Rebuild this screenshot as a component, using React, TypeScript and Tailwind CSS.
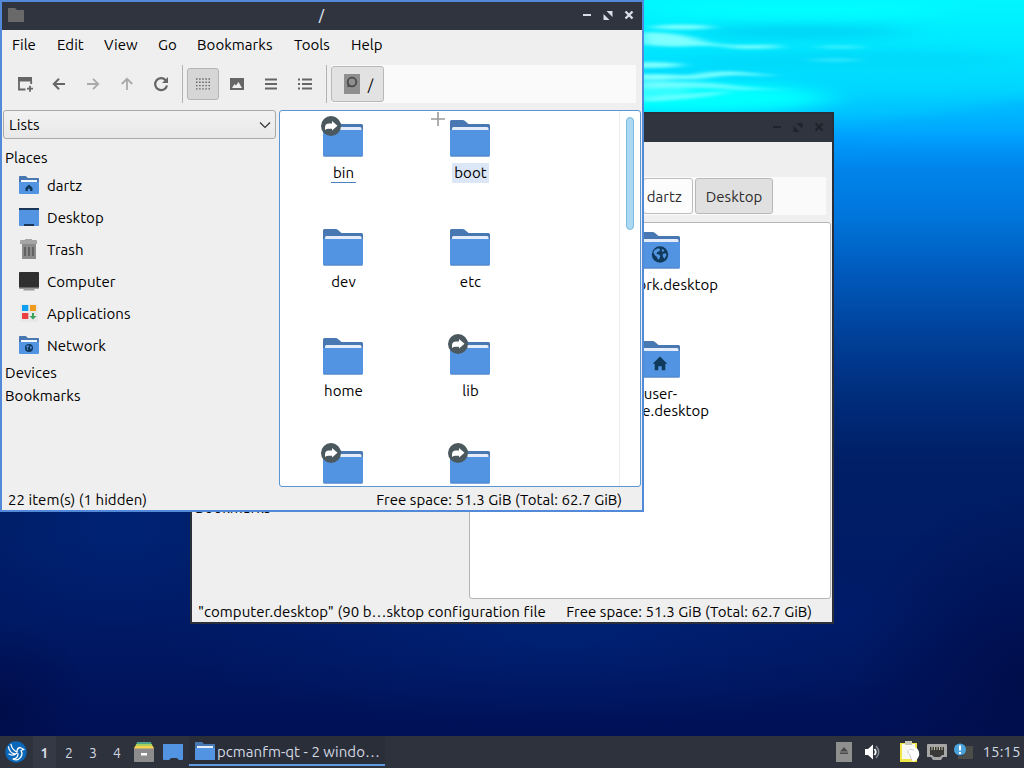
import type { ReactNode } from "react";

// ─── Data ─────────────────────────────────────────────────────────────────────

type Emblem = "globe" | "home";

interface FileItem {
  lines: string[];
  link?: boolean;
  emblem?: Emblem;
  state?: "hover" | "current";
}

const MENUS = [
  { label: "File", width: "w-[45px]" },
  { label: "Edit", width: "w-[47px]" },
  { label: "View", width: "w-[54px]" },
  { label: "Go", width: "w-[39px]" },
  { label: "Bookmarks", width: "w-[97px]" },
  { label: "Tools", width: "w-[57px]" },
  { label: "Help", width: "w-[40px]" },
];

const ROOT_FILES: FileItem[] = [
  { lines: ["bin"], link: true, state: "current" },
  { lines: ["boot"], state: "hover" },
  { lines: ["dev"] },
  { lines: ["etc"] },
  { lines: ["home"] },
  { lines: ["lib"], link: true },
  { lines: [], link: true },
  { lines: [], link: true },
];

const DESKTOP_FILES: FileItem[] = [
  { lines: ["network.desktop"], emblem: "globe" },
  { lines: ["user-", "home.desktop"], emblem: "home" },
];

// ─── Icons ────────────────────────────────────────────────────────────────────

function GlobeMark() {
  return (
    <>
      <circle cx="20.500" cy="22.500" r="8.200" fill="#103a5c" />
      <path
        d="M15 18l3.500-1.700 2 .7-.5 2.200-2.300.8-.7 2 2.800.5 1 1.800-1 2.700-1.300.5-1.200-2.700-2-1.500-1.500-2.800zM22.500 17l2.500 1.200-1.200 1.600-1.600-.6zM23 22l3.500-.8.4 2-1.900 3.600-1.500-1.800z"
        fill="#5294e2"
      />
    </>
  );
}

function HomeMark() {
  return <path d="M20.500 15.500l7.300 7.300h-2v6.400h-3.600v-4h-3.400v4h-3.600v-6.400h-2z" fill="#103a5c" />;
}

function FolderIcon({ link, emblem }: { link?: boolean; emblem?: Emblem }) {
  return (
    <svg viewBox="0.500 0 41 37" className="block w-[41px] h-[37px] overflow-visible">
      <path d="M0.500 1.500q0-1.500 1.500-1.500h11q1.500 0 2.500 1l3.500 3h20q1.500 0 1.500 1.500V20H0.500z" fill="#4877b1" />
      <path d="M2.500 12V8.500Q2.500 7 4 7h33.500Q39 7 39 8.500V12z" fill="#e3ecf8" />
      <path d="M0.500 10h40v25q0 1.500-1.500 1.500H2q-1.500 0-1.500-1.500z" fill="#5294e2" />
      <path d="M1 36h39" stroke="#5585c4" strokeWidth="1" />
      {emblem === "globe" && <GlobeMark />}
      {emblem === "home" && <HomeMark />}
      {link && (
        <>
          <circle cx="8.500" cy="6" r="10" fill="#4b585e" />
          <path d="M2.500 10V7.500Q2.500 3.500 6.500 3.500H9.500V1l5.500 4.800-5.500 4.700V8.700H6Q4 8.700 2.500 10z" fill="#fff" />
        </>
      )}
    </svg>
  );
}

function PlaceFolder({ emblem }: { emblem: Emblem }) {
  return (
    <svg viewBox="0 0 20 18" className="w-5 h-[18px]">
      <path d="M0 .8Q0 0 .8 0h6l2 2H19q1 0 1 1v6H0z" fill="#4877b1" />
      <path d="M2 4h16v3H2z" fill="#f4f7fc" />
      <path d="M0 6h20v11q0 1-1 1H1q-1 0-1-1z" fill="#5294e2" />
      {emblem === "home" ? (
        <path d="M10 8.500l3.500 3.300v3.200h-2.400v-2.300H8.900V15H6.500v-3.200z" fill="#103a5c" />
      ) : (
        <>
          <circle cx="10" cy="12" r="4" fill="#103a5c" />
          <path d="M7.500 10l2-1 .5 1.500-1.500 1 .8 2-1 .7zM11.500 10l1.500 1-1 2.500-1-1.500z" fill="#5294e2" />
        </>
      )}
    </svg>
  );
}

function DesktopIcon() {
  return (
    <svg viewBox="0 0 20 18" className="w-5 h-[18px]">
      <rect width="20" height="18" rx=".8" fill="#5294e2" />
      <path d="M0 0h20v2H0zM5 16h10v2H5z" fill="#1b3556" />
    </svg>
  );
}

function TrashIcon() {
  return (
    <svg viewBox="0 0 20 20" className="w-5 h-5">
      <path d="M1 2q0-1 1-1h4V0h7v1h4q1 0 1 1v3H1z" fill="#a5a5a5" />
      <path d="M3 5h14v15H3z" fill="#8b8b8b" />
      <path d="M6 8v9M10 8v9M14 8v9" stroke="#5c5c5c" strokeWidth="1.700" />
    </svg>
  );
}

function ComputerIcon() {
  return (
    <svg viewBox="0 0 20 19" className="w-5 h-[19px]">
      <rect y="0" width="20" height="16" rx=".7" fill="#2f2f2f" />
      <path d="M0 15.500h20v.8q0 .7-.7.700H.7q-.7 0-.7-.7zM5 17h10l1 1.500H4z" fill="#999" />
    </svg>
  );
}

function ApplicationsIcon() {
  return (
    <svg viewBox="0 0 20 20" className="w-5 h-5">
      <rect x="1" y="1" width="18" height="18" rx="1" fill="#e9e8e6" />
      <path d="M3 2h6.300v6H3z" fill="#0d9ff0" />
      <path d="M11 2h6v6h-6z" fill="#ee9b1c" />
      <path d="M3 10h6.300v6H3z" fill="#ea3f42" />
      <path d="M13 10h2v3h2.500L14 16.500 10.500 13H13z" fill="#3aa35c" />
    </svg>
  );
}

const PLACES: { label: string; icon: ReactNode }[] = [
  { label: "dartz", icon: <PlaceFolder emblem="home" /> },
  { label: "Desktop", icon: <DesktopIcon /> },
  { label: "Trash", icon: <TrashIcon /> },
  { label: "Computer", icon: <ComputerIcon /> },
  { label: "Applications", icon: <ApplicationsIcon /> },
  { label: "Network", icon: <PlaceFolder emblem="globe" /> },
];

// ─── Toolbar ──────────────────────────────────────────────────────────────────

function ToolButton({ checked, faded, children }: { checked?: boolean; faded?: boolean; children: ReactNode }) {
  return (
    <button
      className={`flex items-center justify-center w-8 h-8 rounded-[3px] border ${
        checked ? "bg-[#d6d6d6] border-[#b4b4b4]" : "border-transparent"
      } ${faded ? "text-[#a9a9a9]" : "text-[#666]"}`}
    >
      <svg viewBox="0 0 16 16" className="w-4 h-4 shrink-0" fill="none" stroke="currentColor" strokeWidth="2">
        {children}
      </svg>
    </button>
  );
}

function Toolbar({ children }: { children: ReactNode }) {
  return (
    <div className="flex items-center h-[50px] pl-[7px] pr-[6px] shrink-0">
      <div className="flex gap-0.5">
        <ToolButton>
          <path d="M1 1h14v4.500H1z" fill="currentColor" stroke="none" />
          <path d="M2 4v9.500h6.500M14.200 5v3" strokeWidth="1.800" />
          <path d="M13 9.700v6M10 12.700h6" strokeWidth="1.800" />
        </ToolButton>
        <ToolButton>
          <path d="M14 8H3.500M8 2.800L2.800 8 8 13.200" />
        </ToolButton>
        <ToolButton faded>
          <path d="M2 8h10.500M8 2.800L13.200 8 8 13.200" strokeWidth="1.800" />
        </ToolButton>
        <ToolButton faded>
          <path d="M8 14V3.500M2.800 8L8 2.800 13.200 8" strokeWidth="1.800" />
        </ToolButton>
        <ToolButton>
          <path d="M12.700 4.200A6 6 0 1 0 14 9.500" strokeWidth="2.200" />
          <path d="M15 1v6H9z" fill="currentColor" stroke="none" />
        </ToolButton>
      </div>
      <div className="w-px h-[38px] ml-[5px] mr-1 bg-[#b4b4b4]" />
      <div className="flex gap-0.5">
        <ToolButton checked>
          <path
            d="M1 3h14M1 6.300h14M1 9.600h14M1 12.900h14"
            strokeWidth="1.400"
            strokeDasharray="1.500 1.620"
          />
        </ToolButton>
        <ToolButton>
          <path d="M1 2h14v12H1zM3 12h10L9.500 6 7 9.500 5.500 8z" fill="currentColor" fillRule="evenodd" stroke="none" />
        </ToolButton>
        <ToolButton>
          <path d="M2 3.500h12M2 8h12M2 12.500h12" />
        </ToolButton>
        <ToolButton>
          <path d="M1 3.500h2M5 3.500h10M1 8h2M5 8h10M1 12.500h2M5 12.500h10" strokeWidth="1.800" />
        </ToolButton>
      </div>
      <div className="w-px h-[38px] ml-[5px] mr-1 bg-[#b4b4b4]" />
      <div className="flex flex-1 items-center justify-start h-[38px] bg-[#fafafa]">{children}</div>
    </div>
  );
}

// ─── Window ───────────────────────────────────────────────────────────────────

function TitleBar({ title, active }: { title: string; active: boolean }) {
  return (
    <div
      className={`flex items-center h-7 pl-[6px] pr-[7px] pb-0.5 shrink-0 bg-[#2f343f] ${
        active ? "text-[#d8dee6]" : "text-[#1f232b]"
      }`}
    >
      <svg viewBox="0 0 16 14" className="w-4 h-[14px]">
        <path d="M0 0h7l2 2h7v12H0z" fill="#696969" />
      </svg>
      <span className="flex-1 pl-[38px] text-center text-[14px] font-medium">{title}</span>
      <svg viewBox="0 0 54 12" className="w-[54px] h-3" fill="none" stroke="currentColor" strokeWidth="2">
        <path d="M2 6h8" />
        <path d="M25.500 2h6v6zM22.500 5v6h6z" fill="currentColor" stroke="none" />
        <path d="M44.500 2.500l7 7M51.500 2.500l-7 7" strokeWidth="2.400" />
      </svg>
    </div>
  );
}

function Sidebar() {
  return (
    <div className="w-[277px] pl-px pr-[3px] shrink-0">
      <div className="flex items-center justify-between h-[29px] pl-[5px] pr-1 rounded-[3px] border border-[#a9a9a9] bg-linear-to-b from-[#f2f2f2] to-[#e8e8e8]">
        <span>Lists</span>
        <svg viewBox="0 0 12 8" className="w-3 h-2" fill="none" stroke="#333" strokeWidth="1.200">
          <path d="M1 1.500l5 5 5-5" />
        </svg>
      </div>
      <div className="h-[23px] mt-[7px] pl-[2px] leading-[23px]">Places</div>
      {PLACES.map(({ label, icon }) => (
        <div key={label} className="flex items-center h-8 gap-2 pl-4">
          {icon}
          <span className="pt-0.5">{label}</span>
        </div>
      ))}
      <div className="h-[23px] pl-[2px] leading-[23px]">Devices</div>
      <div className="h-[23px] pl-[2px] leading-[23px]">Bookmarks</div>
    </div>
  );
}

function FileCell({ item }: { item: FileItem }) {
  return (
    <div className="flex flex-col items-center h-[109px] pt-[9px]">
      <FolderIcon link={item.link} emblem={item.emblem} />
      <div
        className={`mt-[6px] pt-px text-center leading-[17px] ${
          item.state === "hover" ? "bg-[#dbe6f6] h-5 px-[2px]" : ""
        } ${item.state === "current" ? "border-b border-[#4a7fc4] h-5 px-[2px]" : ""}`}
      >
        {item.lines.map((line) => (
          <div key={line}>{line}</div>
        ))}
      </div>
    </div>
  );
}

interface WindowProps {
  title: string;
  active: boolean;
  place: string;
  path: ReactNode;
  files: ReactNode;
  status: string;
  scrollbar?: boolean;
}

function FileWindow({ title, active, place, path, files, status, scrollbar }: WindowProps) {
  return (
    <div
      className={`absolute flex flex-col w-[644px] h-[512px] border-2 bg-[#efefef] ${place} ${
        active ? "border-[#5289d9]" : "border-[#2a2f3a]"
      }`}
    >
      <TitleBar title={title} active={active} />
      <div className="flex items-center h-[29px] pl-[10px] shrink-0">
        {MENUS.map(({ label, width }) => (
          <span key={label} className={`${width} shrink-0 whitespace-nowrap`}>{label}</span>
        ))}
      </div>
      <Toolbar>{path}</Toolbar>
      <div className="flex h-[377px] mt-px shrink-0 pr-px">
        <Sidebar />
        <div
          className={`relative flex flex-1 rounded-[3px] border bg-white overflow-hidden ${
            active ? "border-[#5a96d2]" : "border-[#b5b5b5]"
          }`}
        >
          <div className="grid grid-cols-[127px_127px] content-start w-[339px]">{files}</div>
          {scrollbar && (
            <div className="flex-1 pl-[6px] pt-[6px] border-l border-[#ececec]">
              <div className="w-2 h-[113px] rounded-full border border-[#7db9de] bg-[#abd9f3]" />
            </div>
          )}
        </div>
      </div>
      <div className="flex items-center justify-between flex-1 pt-[2px] pl-[6px] pr-5 whitespace-nowrap">
        <span>{status}</span>
        <span>Free space: 51.3 GiB (Total: 62.7 GiB)</span>
      </div>
    </div>
  );
}

// ─── Wallpaper ────────────────────────────────────────────────────────────────

function Wallpaper() {
  return (
    <svg viewBox="0 0 1024 768" className="absolute inset-0 w-full h-full" preserveAspectRatio="none">
      <defs>
        <linearGradient id="sea" x1="0" y1="0" x2="0" y2="1">
          <stop offset="0" stopColor="#00f6ff" />
          <stop offset=".06" stopColor="#00e8ff" />
          <stop offset=".115" stopColor="#00d6ff" />
          <stop offset=".15" stopColor="#00c0ff" />
          <stop offset=".18" stopColor="#009cfc" />
          <stop offset=".22" stopColor="#0084ea" />
          <stop offset=".28" stopColor="#0076dc" />
          <stop offset=".36" stopColor="#0058ba" />
          <stop offset=".44" stopColor="#004098" />
          <stop offset=".52" stopColor="#002c7a" />
          <stop offset=".6" stopColor="#001f66" />
          <stop offset=".8" stopColor="#001a66" />
          <stop offset=".96" stopColor="#001056" />
        </linearGradient>
        <radialGradient id="glow">
          <stop offset="0" stopColor="#00267c" stopOpacity=".6" />
          <stop offset="1" stopColor="#00267c" stopOpacity="0" />
        </radialGradient>
        <radialGradient id="deep">
          <stop offset="0" stopColor="#000c48" stopOpacity=".85" />
          <stop offset="1" stopColor="#000c48" stopOpacity="0" />
        </radialGradient>
        <filter id="soft" x="-20%" y="-100%" width="140%" height="300%">
          <feGaussianBlur stdDeviation="8 1.600" />
        </filter>
        <filter id="haze" x="-20%" y="-100%" width="140%" height="300%">
          <feGaussianBlur stdDeviation="22 6" />
        </filter>
      </defs>
      <rect width="1024" height="768" fill="url(#sea)" />
      <g filter="url(#haze)">
        <ellipse cx="690" cy="98" rx="140" ry="16" fill="#00ffff" />
        <ellipse cx="800" cy="32" rx="110" ry="6" fill="#00d0f4" />
        <ellipse cx="880" cy="60" rx="130" ry="8" fill="#00d8fa" />
        <ellipse cx="760" cy="62" rx="70" ry="6" fill="#00d8f8" />
        <ellipse cx="800" cy="10" rx="150" ry="8" fill="#00ffff" />
        <path d="M860 128q90-16 200-34v46H860z" fill="#00a8ff" opacity=".5" />
      </g>
      <g filter="url(#soft)" fill="#7dffff">
        <ellipse cx="682" cy="27" rx="30" ry="2.500" />
        <path d="M640 32q40 0 60 8t80 4l-30 5q-40-5-60-3t-50-2z" />
        <ellipse cx="755" cy="47" rx="28" ry="2" opacity=".7" />
        <ellipse cx="650" cy="65" rx="32" ry="3" />
        <path d="M680 78q30-9 60-6l40 4-50-1-40 5z" />
        <ellipse cx="655" cy="77" rx="34" ry="3" />
        <path d="M640 82q60-2 90 3t80 4l-70 1q-40-4-100-1z" opacity=".8" />
        <path d="M640 98q40-4 90-7-20 8-90 11z" opacity=".8" />
        <ellipse cx="650" cy="89" rx="40" ry="9" opacity=".4" />
        <ellipse cx="840" cy="47" rx="24" ry="1.500" opacity=".5" />
        <ellipse cx="835" cy="60" rx="26" ry="1.500" opacity=".4" />
      </g>
      <ellipse cx="560" cy="635" rx="400" ry="90" fill="url(#glow)" />
      <ellipse cx="120" cy="530" rx="170" ry="100" fill="url(#glow)" />
      <ellipse cx="1024" cy="680" rx="170" ry="190" fill="url(#deep)" />
      <ellipse cx="0" cy="710" rx="90" ry="90" fill="url(#deep)" />
    </svg>
  );
}

// ─── Panel ────────────────────────────────────────────────────────────────────

function Panel() {
  return (
    <div className="absolute inset-x-0 bottom-0 flex items-center h-8 pl-[5px] bg-[#2e323d] text-[#d3d9e3]">
      <svg viewBox="0 0 22 22" className="w-[22px] h-[22px] shrink-0">
        <circle cx="11" cy="11" r="10.700" fill="#0b67b8" />
        <path
          d="M3.500 6Q4.500 12 10 13M6 3.500Q7 9 12 11M4 13Q8 15.500 12 12M12 11Q12 7 15 6.500L19 8.500 16 9.500Q18.500 14 14.500 17.500Q11.500 20 8 18Q13 17.500 13 13"
          fill="none"
          stroke="#fff"
          strokeWidth="1.300"
          strokeLinecap="round"
          strokeLinejoin="round"
        />
      </svg>
      <div className="flex ml-[6px] h-8 leading-[34px] text-center text-[14px] shrink-0">
        <span className="w-[23px] bg-[#353945] font-bold">1</span>
        <span className="w-6 ml-px">2</span>
        <span className="w-6">3</span>
        <span className="w-6">4</span>
      </div>
      <svg viewBox="0 0 20 20" className="w-5 h-5 ml-[5px] shrink-0">
        <path d="M3 0h14l1 4H2z" fill="#4fa58a" />
        <path d="M2 2h16l1 5H1z" fill="#a9cf5c" />
        <path d="M1 4h18l1 3H0z" fill="#f3d350" />
        <rect y="6.500" width="20" height="13.500" rx="1" fill="#8c8c8c" />
        <rect x="7" y="11" width="6" height="2.500" fill="#fff" />
      </svg>
      <svg viewBox="0 0 20 18" className="w-5 h-[18px] ml-[9px] shrink-0">
        <path d="M0 1h20v15q0 1-1 1h-3l-2-2H8l-2 2H1q-1 0-1-1z" fill="#5294e2" />
      </svg>
      <div className="flex items-center w-[196px] h-[30px] ml-[6px] pl-[6px] pt-0.5 gap-0.5 border-b-2 border-[#5f9be3] bg-[#2a2e38] shrink-0 self-start">
        <svg viewBox="0 0 20 18" className="w-5 h-[18px] shrink-0">
          <path d="M0 0h7l2 2h11v6H0z" fill="#4877b1" />
          <path d="M2 4h16v3H2z" fill="#e6eefa" />
          <path d="M0 6h20v12H0z" fill="#5294e2" />
        </svg>
        <span className="pt-0.5 whitespace-nowrap text-[15px] tracking-[0.04px]">pcmanfm-qt - 2 windo…</span>
      </div>
      <div className="flex-1" />
      <svg viewBox="0 0 16 20" className="w-4 h-5 shrink-0">
        <rect width="16" height="20" fill="#8f8f8f" />
        <path d="M8 5l4 4.500H4zM4 10.500h8V12H4z" fill="#4a4a4a" />
      </svg>
      <svg viewBox="0 0 18 16" className="w-[18px] h-4 ml-3 shrink-0">
        <path d="M1 5h3l5-4.500v15L4 11H1z" fill="#fff" />
        <path d="M10.500 5q2.500 3 0 6" stroke="#fff" strokeWidth="1.800" fill="none" />
        <path d="M12 2q5.500 6 0 12" stroke="#858994" strokeWidth="1.500" fill="none" />
      </svg>
      <svg viewBox="0 0 20 22" className="w-5 h-[22px] ml-[18px] shrink-0">
        <path d="M0 2h17v19H0z" fill="#f0e645" />
        <path d="M2 3h13v15H2z" fill="#f8f8f3" />
        <path d="M5 0h7v4H5z" fill="#c9c9b8" />
        <path d="M8 8q2-2.500 5-2 5 .5 6 5 1 3-1 6-2.500 3.500-6 3.500L10.500 16 8 13z" fill="#fff" />
        <path d="M8 9q-1 3 2 5l2 6M9 8l5 1" stroke="#bcbcbc" strokeWidth=".8" fill="none" />
      </svg>
      <svg viewBox="0 0 20 18" className="w-5 h-[18px] ml-[7px] shrink-0">
        <path d="M1 1h18q1 0 1 1v12h-4l-2 3H6l-2-3H0V2q0-1 1-1z" fill="#a6a6a6" />
        <path d="M3 4h14v8h-2l-2 2H7l-2-2H3z" fill="#3a3a38" />
        <path d="M5 4v3M7.500 4v3M10 4v3M12.500 4v3M15 4v3" stroke="#c4bfa8" strokeWidth="1" />
      </svg>
      <svg viewBox="0 0 20 18" className="w-5 h-[18px] ml-[7px] shrink-0">
        <path d="M9 3h10v13H4v-3h5z" fill="#4b4d48" />
        <circle cx="6" cy="6.500" r="6" fill="#4ba3dd" />
        <path d="M6 2.500v5M6 9v2" stroke="#fff" strokeWidth="2" />
      </svg>
      <span className="w-[43px] ml-[6px] mr-px text-center text-[15px] shrink-0">15:15</span>
    </div>
  );
}

// ─── App ──────────────────────────────────────────────────────────────────────

export default function App() {
  return (
    <div className="relative w-[1024px] h-[768px] overflow-hidden text-[15px] leading-5 tracking-[0.05px] text-black font-['Ubuntu','Noto_Sans',sans-serif] select-none">
      <Wallpaper />

      <FileWindow
        title=""
        active={false}
        place="left-[190px] top-[112px]"
        path={
          <>
            <div className="w-[122px]" />
            <div className="flex items-center justify-end w-[50px] h-9 pt-0.5 pr-[10px] rounded-[3px] border border-[#bdbdbd] bg-[#fcfcfc] text-[#2c2c2c]">
              dartz
            </div>
            <div className="flex items-center justify-center w-[78px] h-9 pt-0.5 ml-0.5 rounded-[3px] border border-[#b8b8b8] bg-[#e0e0e0] text-[#2c2c2c]">
              Desktop
            </div>
          </>
        }
        files={DESKTOP_FILES.map((item) => (
          <div key={item.lines[0]} className="col-start-2">
            <FileCell item={item} />
          </div>
        ))}
        status={'"computer.desktop" (90 b…sktop configuration file'}
      />

      <FileWindow
        title="/"
        active
        place="left-0 top-0"
        scrollbar
        path={
          <div className="flex items-center justify-center gap-2 w-[53px] h-9 rounded-[3px] border border-[#b8b8b8] bg-[#e2e2e2]">
            <svg viewBox="0 0 16 20" className="w-4 h-5 ml-0.5">
              <rect width="16" height="20" fill="#8f8f8f" />
              <circle cx="8" cy="8" r="4.300" fill="none" stroke="#4a4a4a" strokeWidth="1.800" />
              <path d="M3.500 8v5.500l3-1.500z" fill="#4a4a4a" />
            </svg>
            <span className="pt-px">/</span>
          </div>
        }
        files={ROOT_FILES.map((item, i) => (
          <FileCell key={i} item={item} />
        ))}
        status="22 item(s) (1 hidden)"
      />

      {/* Mouse cursor */}
      <svg viewBox="0 0 14 14" className="absolute left-[431px] top-[112px] w-[14px] h-[14px]">
        <path d="M7 0v14M0 7h14" stroke="#9b9b9b" strokeWidth="1.600" />
      </svg>

      <Panel />
    </div>
  );
}
